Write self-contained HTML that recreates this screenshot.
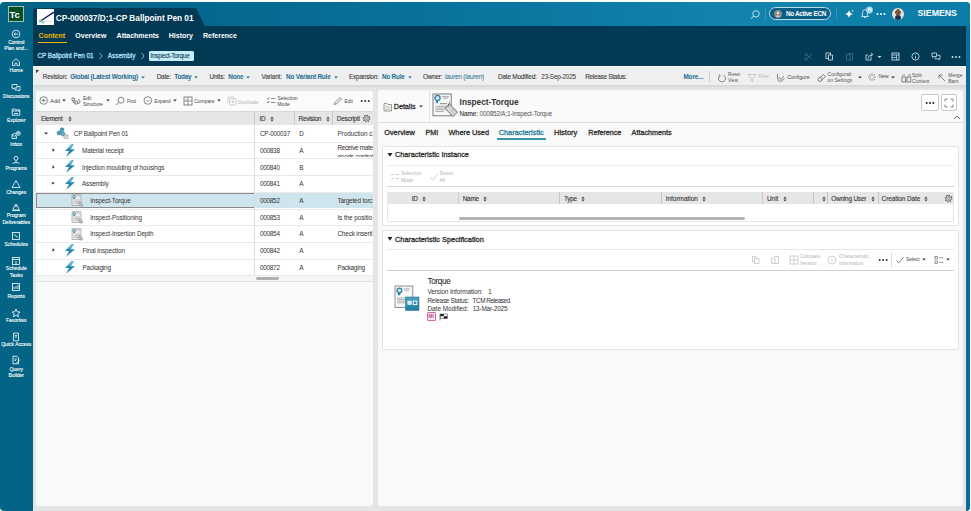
<!DOCTYPE html>
<html><head><meta charset="utf-8"><title>Teamcenter</title>
<style>
html,body{margin:0;padding:0;}
body{width:971px;height:511px;position:relative;overflow:hidden;background:#fff;font-family:"Liberation Sans",sans-serif;}
body>div{position:absolute;}
.t{position:absolute;white-space:nowrap;}
</style></head><body>
<div style="left:0px;top:1.5px;width:970.3px;height:509px;background:#036486;border-radius:4px;"></div>
<div style="left:32.5px;top:1.5px;width:937.8px;height:24.5px;background:linear-gradient(90deg,#036486 0%,#056890 20%,#0a76a0 50%,#1284ad 75%,#0b7ca7 100%);border-top-right-radius:4px;"></div>
<div style="left:32.5px;top:25.5px;width:933.5px;height:40.5px;background:#023a56;"></div>
<svg style="position:absolute;left:32.5px;top:7.7px;" width="175" height="18.3" viewBox="0 0 175 18.3"><path d="M0 18.3 V3 Q0 0 3 0 H163 L172 18.3 Z" fill="#023a56"/></svg>
<div style="left:32.5px;top:66px;width:933.5px;height:445px;background:#e5e5e5;"></div>
<div style="left:966px;top:25.5px;width:4.3px;height:483px;background:#0a6e9a;border-bottom-right-radius:3px;"></div>
<div style="left:7.8px;top:5.5px;width:16.7px;height:16.1px;background:#0b4d26;border:1px solid #9cc3b0;box-sizing:border-box;"></div>
<span class="t" style="left:9.6px;top:10.20px;font-size:9.40px;line-height:10px;color:#fff;font-weight:700;">Tc</span>
<svg style="position:absolute;left:11px;top:29.299999999999997px;" width="10" height="10" viewBox="0 0 10 10"><circle cx="5" cy="5" r="3.8" fill="none" stroke="#fff" stroke-width="0.8"/><path d="M7 5H3.2M4.6 3.5L3.1 5L4.6 6.5" fill="none" stroke="#fff" stroke-width="0.8"/></svg>
<span class="t" style="left:0px;top:38.70px;font-size:5.00px;line-height:7px;color:#fff;font-weight:400;width:32.5px;text-align:center;-webkit-text-stroke:0.12px #fff;">Control</span>
<span class="t" style="left:0px;top:44.50px;font-size:5.00px;line-height:7px;color:#fff;font-weight:400;width:32.5px;text-align:center;-webkit-text-stroke:0.12px #fff;">Plan and...</span>
<svg style="position:absolute;left:11px;top:57.4px;" width="10" height="10" viewBox="0 0 10 10"><path d="M1.5 5L5 1.8L8.5 5V8.6H6V6.2H4V8.6H1.5Z" fill="none" stroke="#fff" stroke-width="0.8"/></svg>
<span class="t" style="left:0px;top:66.70px;font-size:5.00px;line-height:7px;color:#fff;font-weight:400;width:32.5px;text-align:center;-webkit-text-stroke:0.12px #fff;">Home</span>
<svg style="position:absolute;left:11px;top:83.2px;" width="10" height="10" viewBox="0 0 10 10"><path d="M1 1.5H6V5H3L1.8 6V5H1Z M4 5.5V7H7L8.2 8V7H9V3.5H6.5" fill="none" stroke="#fff" stroke-width="0.8"/></svg>
<span class="t" style="left:0px;top:93.00px;font-size:5.00px;line-height:7px;color:#fff;font-weight:400;width:32.5px;text-align:center;-webkit-text-stroke:0.12px #fff;">Discussions</span>
<svg style="position:absolute;left:11px;top:106.7px;" width="10" height="10" viewBox="0 0 10 10"><path d="M1.2 2H4L4.8 2.8H8.8V8.2H1.2Z M1.2 4H8.8" fill="none" stroke="#fff" stroke-width="0.8"/><path d="M3 6.5H7" stroke="#fff" stroke-width="0.8"/></svg>
<span class="t" style="left:0px;top:116.50px;font-size:5.00px;line-height:7px;color:#fff;font-weight:400;width:32.5px;text-align:center;-webkit-text-stroke:0.12px #fff;">Explorer</span>
<svg style="position:absolute;left:11px;top:130.2px;" width="10" height="10" viewBox="0 0 10 10"><path d="M1 4.5L5 3L5.5 8.5H1Z M1 4.5L3.2 6.5L5.3 5" fill="none" stroke="#fff" stroke-width="0.8"/><circle cx="7.3" cy="3.3" r="2.6" fill="#bfe3f2" stroke="#005f83" stroke-width="0.5"/><text x="7.3" y="4.5" font-size="3" text-anchor="middle" fill="#005f83" font-family="Liberation Sans">10</text></svg>
<span class="t" style="left:0px;top:140.50px;font-size:5.00px;line-height:7px;color:#fff;font-weight:400;width:32.5px;text-align:center;-webkit-text-stroke:0.12px #fff;">Inbox</span>
<svg style="position:absolute;left:11px;top:154.7px;" width="10" height="10" viewBox="0 0 10 10"><circle cx="5" cy="3.3" r="2" fill="none" stroke="#fff" stroke-width="0.8"/><path d="M5 5.3V7 M1.5 8.5Q5 6.2 8.5 8.5" fill="none" stroke="#fff" stroke-width="0.8"/></svg>
<span class="t" style="left:0px;top:165.00px;font-size:5.00px;line-height:7px;color:#fff;font-weight:400;width:32.5px;text-align:center;-webkit-text-stroke:0.12px #fff;">Programs</span>
<svg style="position:absolute;left:11px;top:179.1px;" width="10" height="10" viewBox="0 0 10 10"><path d="M5 1.5L9 8.5H1Z" fill="none" stroke="#fff" stroke-width="0.8"/></svg>
<span class="t" style="left:0px;top:188.50px;font-size:5.00px;line-height:7px;color:#fff;font-weight:400;width:32.5px;text-align:center;-webkit-text-stroke:0.12px #fff;">Changes</span>
<svg style="position:absolute;left:11px;top:202.7px;" width="10" height="10" viewBox="0 0 10 10"><path d="M2 7Q2 3 5 3Q8 3 8 7Z M1 7.5H9 M4 3V1.6H6V3" fill="none" stroke="#fff" stroke-width="0.8"/></svg>
<span class="t" style="left:0px;top:212.10px;font-size:5.00px;line-height:7px;color:#fff;font-weight:400;width:32.5px;text-align:center;-webkit-text-stroke:0.12px #fff;">Program</span>
<span class="t" style="left:0px;top:219.00px;font-size:5.00px;line-height:7px;color:#fff;font-weight:400;width:32.5px;text-align:center;-webkit-text-stroke:0.12px #fff;">Deliverables</span>
<svg style="position:absolute;left:11px;top:231.2px;" width="10" height="10" viewBox="0 0 10 10"><rect x="1.5" y="1.5" width="7" height="7" fill="none" stroke="#fff" stroke-width="0.8"/><path d="M3 3.5L7 6.5" stroke="#fff" stroke-width="0.8"/></svg>
<span class="t" style="left:0px;top:240.90px;font-size:5.00px;line-height:7px;color:#fff;font-weight:400;width:32.5px;text-align:center;-webkit-text-stroke:0.12px #fff;">Schedules</span>
<svg style="position:absolute;left:11px;top:255.7px;" width="10" height="10" viewBox="0 0 10 10"><rect x="1.5" y="1.5" width="7" height="7" fill="none" stroke="#fff" stroke-width="0.8"/><path d="M1.5 3.5H8.5 M5 5V8.5" stroke="#fff" stroke-width="0.8"/></svg>
<span class="t" style="left:0px;top:265.00px;font-size:5.00px;line-height:7px;color:#fff;font-weight:400;width:32.5px;text-align:center;-webkit-text-stroke:0.12px #fff;">Schedule</span>
<span class="t" style="left:0px;top:271.50px;font-size:5.00px;line-height:7px;color:#fff;font-weight:400;width:32.5px;text-align:center;-webkit-text-stroke:0.12px #fff;">Tasks</span>
<svg style="position:absolute;left:11px;top:282.2px;" width="10" height="10" viewBox="0 0 10 10"><rect x="1.5" y="1.5" width="7" height="7" fill="none" stroke="#fff" stroke-width="0.8"/><path d="M3 7V5 M5 7V4 M7 7V3" stroke="#fff" stroke-width="0.8"/></svg>
<span class="t" style="left:0px;top:293.40px;font-size:5.00px;line-height:7px;color:#fff;font-weight:400;width:32.5px;text-align:center;-webkit-text-stroke:0.12px #fff;">Reports</span>
<svg style="position:absolute;left:11px;top:308.1px;" width="10" height="10" viewBox="0 0 10 10"><path d="M5 1L6.2 3.8L9 4L6.8 5.9L7.5 8.8L5 7.2L2.5 8.8L3.2 5.9L1 4L3.8 3.8Z" fill="none" stroke="#fff" stroke-width="0.8"/></svg>
<span class="t" style="left:0px;top:316.90px;font-size:5.00px;line-height:7px;color:#fff;font-weight:400;width:32.5px;text-align:center;-webkit-text-stroke:0.12px #fff;">Favorites</span>
<svg style="position:absolute;left:11px;top:332.0px;" width="10" height="10" viewBox="0 0 10 10"><path d="M2.5 1.2H7.5V8.8H2.5Z M3.8 3.5H6.2 M3.8 5H6.2" fill="none" stroke="#fff" stroke-width="0.8"/></svg>
<span class="t" style="left:0px;top:341.40px;font-size:5.00px;line-height:7px;color:#fff;font-weight:400;width:32.5px;text-align:center;-webkit-text-stroke:0.12px #fff;">Quick Access</span>
<svg style="position:absolute;left:11px;top:354.6px;" width="10" height="10" viewBox="0 0 10 10"><path d="M2 1.2H6L7.5 2.7V8.8H2Z M3.5 4H6 M3.5 5.5H5" fill="none" stroke="#fff" stroke-width="0.8"/><path d="M5.5 8L8.8 4.7" stroke="#fff" stroke-width="0.9"/></svg>
<span class="t" style="left:0px;top:365.90px;font-size:5.00px;line-height:7px;color:#fff;font-weight:400;width:32.5px;text-align:center;-webkit-text-stroke:0.12px #fff;">Query</span>
<span class="t" style="left:0px;top:371.80px;font-size:5.00px;line-height:7px;color:#fff;font-weight:400;width:32.5px;text-align:center;-webkit-text-stroke:0.12px #fff;">Builder</span>
<div style="left:37.2px;top:8.6px;width:17px;height:16px;background:#fff;"></div>
<svg style="position:absolute;left:37.2px;top:8.6px;" width="17" height="16" viewBox="0 0 17 16"><path d="M3.5 12L17 3" stroke="#15205a" stroke-width="1.5"/><circle cx="3.5" cy="12" r="1.6" fill="#7fb3c8"/><circle cx="6" cy="13.5" r="1.3" fill="#9cc"/><path d="M6 12.5H15" stroke="#ccc" stroke-width="0.5"/></svg>
<span class="t" style="left:55.7px;top:12.60px;font-size:8.26px;line-height:12px;color:#fff;font-weight:700;">CP-000037/D;1-CP Ballpoint Pen 01</span>
<svg style="position:absolute;left:749px;top:8.5px;" width="12" height="11" viewBox="0 0 12 11"><circle cx="7" cy="4.8" r="3.2" fill="none" stroke="#cfe8f2" stroke-width="0.9"/><path d="M4.7 7.1L2 9.8" stroke="#cfe8f2" stroke-width="1"/></svg>
<div style="left:765px;top:8px;width:0.7px;height:12px;background:#3b8fb3;"></div>
<div style="left:769px;top:7.2px;width:62px;height:12.6px;border:1px solid #b9dbe8;border-radius:7px;background:#0a5f86;box-sizing:border-box;"></div>
<svg style="position:absolute;left:774px;top:10px;" width="8" height="8" viewBox="0 0 8 8"><circle cx="4" cy="4" r="3.9" fill="#948c86"/><circle cx="4" cy="3" r="1.2" fill="#e8e4e0"/><path d="M1.8 6.8Q4 4.2 6.2 6.8Z" fill="#e8e4e0"/></svg>
<span class="t" style="left:786px;top:9.50px;font-size:6.40px;line-height:8px;color:#fff;font-weight:700;letter-spacing:-0.354px;">No Active ECN</span>
<div style="left:836px;top:8px;width:0.7px;height:12px;background:#3b8fb3;"></div>
<svg style="position:absolute;left:844px;top:8.5px;" width="10" height="10" viewBox="0 0 10 10"><path d="M5 1Q5.6 4.4 9 5Q5.6 5.6 5 9Q4.4 5.6 1 5Q4.4 4.4 5 1Z" fill="#fff"/><circle cx="8.6" cy="1.8" r="0.7" fill="#fff"/></svg>
<svg style="position:absolute;left:859px;top:6px;" width="15" height="13" viewBox="0 0 15 13"><path d="M2.5 10.5H9.5L8.5 9V6.5Q8.5 3.8 6 3.5Q3.5 3.8 3.5 6.5V9Z M5 11.2Q6 12.4 7 11.2" fill="none" stroke="#e8f4f8" stroke-width="0.8"/><circle cx="10.5" cy="4" r="3.4" fill="#9fd6ec"/><text x="10.5" y="5.3" font-size="3.6" text-anchor="middle" fill="#fff" font-family="Liberation Sans" font-weight="700">10</text></svg>
<svg style="position:absolute;left:876px;top:11.5px;" width="10" height="4" viewBox="0 0 10 4"><circle cx="1.5" cy="2" r="1" fill="#fff"/><circle cx="5" cy="2" r="1" fill="#fff"/><circle cx="8.5" cy="2" r="1" fill="#fff"/></svg>
<div style="left:891.5px;top:7.7px;width:12px;height:12px;border-radius:50%;background:radial-gradient(circle at 50% 35%,#7a5a3e 0 28%,#e8e2d8 30% 100%);overflow:hidden;"><div style="position:absolute;left:3px;top:7px;width:6px;height:6px;border-radius:50%;background:#1f3350;"></div></div>
<span class="t" style="left:917.5px;top:8.20px;font-size:8.78px;line-height:10px;color:#fff;font-weight:700;letter-spacing:0px;">SIEMENS</span>
<span class="t" style="left:38.6px;top:30.70px;font-size:7.00px;line-height:10px;color:#f0b400;font-weight:700;">Content</span>
<span class="t" style="left:75.3px;top:30.70px;font-size:7.00px;line-height:10px;color:#fff;font-weight:700;">Overview</span>
<span class="t" style="left:116.6px;top:30.70px;font-size:7.00px;line-height:10px;color:#fff;font-weight:700;">Attachments</span>
<span class="t" style="left:168.8px;top:30.70px;font-size:7.00px;line-height:10px;color:#fff;font-weight:700;">History</span>
<span class="t" style="left:203px;top:30.70px;font-size:7.00px;line-height:10px;color:#fff;font-weight:700;">Reference</span>
<div style="left:37.5px;top:42px;width:29px;height:1.2px;background:#f0b400;"></div>
<span class="t" style="left:37.5px;top:52.40px;font-size:6.40px;line-height:8px;color:#a9dcef;font-weight:400;letter-spacing:-0.061px;-webkit-text-stroke:0.3px #a9dcef;">CP Ballpoint Pen 01</span>
<svg style="position:absolute;left:98px;top:51.8px;" width="5" height="8" viewBox="0 0 5 8"><path d="M1.5 1L4 4L1.5 7" fill="none" stroke="#a9dcef" stroke-width="0.7"/></svg>
<span class="t" style="left:107.8px;top:52.40px;font-size:6.40px;line-height:8px;color:#a9dcef;font-weight:400;letter-spacing:-0.016px;-webkit-text-stroke:0.3px #a9dcef;">Assembly</span>
<svg style="position:absolute;left:139.5px;top:51.8px;" width="5" height="8" viewBox="0 0 5 8"><path d="M1.5 1L4 4L1.5 7" fill="none" stroke="#a9dcef" stroke-width="0.7"/></svg>
<div style="left:148.6px;top:51px;width:45.1px;height:10.3px;background:#c5eefa;border-radius:1.5px;"></div>
<span class="t" style="left:150.5px;top:52.20px;font-size:6.40px;line-height:8px;color:#0d3a4f;font-weight:400;letter-spacing:-0.236px;-webkit-text-stroke:0.1px #0d3a4f;">Inspect-Torque</span>
<svg style="position:absolute;left:804px;top:52px;" width="9" height="9" viewBox="0 0 9 9"><circle cx="2" cy="7" r="1.2" fill="none" stroke="#3d7490" stroke-width="0.7"/><circle cx="2" cy="2.5" r="1.2" fill="none" stroke="#3d7490" stroke-width="0.7"/><path d="M3 6.3L8 2 M3 3.2L8 7" stroke="#3d7490" stroke-width="0.7"/></svg>
<svg style="position:absolute;left:825px;top:52px;" width="9" height="9" viewBox="0 0 9 9"><rect x="1" y="1" width="4.5" height="5.5" fill="none" stroke="#d8ecf4" stroke-width="0.8"/><path d="M3.5 3H7.5V8H3.5Z" fill="#023a56" stroke="#d8ecf4" stroke-width="0.8"/></svg>
<svg style="position:absolute;left:845px;top:52px;" width="9" height="9" viewBox="0 0 9 9"><path d="M1.5 2.5H5V8H1.5Z M4 1.5H7.5V8H4" fill="none" stroke="#3d7490" stroke-width="0.8"/></svg>
<svg style="position:absolute;left:865px;top:52px;" width="9" height="9" viewBox="0 0 9 9"><path d="M6 4.5V8H1V3H3" fill="none" stroke="#d8ecf4" stroke-width="0.8"/><path d="M3 6.5Q3.5 3 7.5 2.5 M6 1L7.8 2.5L6 4" fill="none" stroke="#d8ecf4" stroke-width="0.8"/></svg>
<svg style="position:absolute;left:877px;top:54.5px;" width="5" height="4" viewBox="0 0 5 4"><path d="M0.5 1H4.5L2.5 3Z" fill="#d8ecf4"/></svg>
<svg style="position:absolute;left:891px;top:52px;" width="9" height="9" viewBox="0 0 9 9"><rect x="1" y="1" width="7" height="7" fill="none" stroke="#d8ecf4" stroke-width="0.8"/><path d="M1 3H8 M5.5 3V8 M1 5.5H5.5" stroke="#d8ecf4" stroke-width="0.7"/></svg>
<svg style="position:absolute;left:911px;top:52px;" width="9" height="9" viewBox="0 0 9 9"><circle cx="4.5" cy="4.5" r="3.6" fill="none" stroke="#d8ecf4" stroke-width="0.8"/><path d="M4.5 3.8V6.5" stroke="#d8ecf4" stroke-width="0.8"/><circle cx="4.5" cy="2.6" r="0.45" fill="#d8ecf4"/></svg>
<svg style="position:absolute;left:931px;top:52px;" width="10" height="9" viewBox="0 0 10 9"><path d="M1 1H5.5V4.5H2.5L1.5 5.5V4.5H1Z M4 5.3V6.8H7L8.2 7.8V6.8H9V3.3H6.3" fill="none" stroke="#d8ecf4" stroke-width="0.8"/></svg>
<svg style="position:absolute;left:951px;top:54.5px;" width="10" height="4" viewBox="0 0 10 4"><circle cx="1.5" cy="2" r="0.9" fill="#d8ecf4"/><circle cx="5" cy="2" r="0.9" fill="#d8ecf4"/><circle cx="8.5" cy="2" r="0.9" fill="#d8ecf4"/></svg>
<div style="left:32.5px;top:66px;width:933.5px;height:19.2px;background:#efefef;border-top:1.2px solid #fafafa;box-sizing:border-box;box-shadow:0 0.8px 0 #d6d6d6, 0 2px 2px rgba(0,0,0,0.06);"></div>
<svg style="position:absolute;left:35.5px;top:69.5px;" width="4" height="4" viewBox="0 0 4 4"><path d="M0 0H3.2L0 3.2Z" fill="#333"/></svg>
<span class="t" style="left:42.8px;top:72.20px;font-size:6.40px;line-height:10px;color:#3b3b3b;font-weight:400;letter-spacing:-0.183px;-webkit-text-stroke:0.1px #3b3b3b;">Revision:</span>
<span class="t" style="left:70.2px;top:72.20px;font-size:6.40px;line-height:10px;color:#1a6c93;font-weight:700;letter-spacing:-0.186px;">Global (Latest Working)</span>
<svg style="position:absolute;left:140.9px;top:75.7px;" width="4" height="3" viewBox="0 0 4 3"><path d="M0.2 0.5H3.8L2 2.5Z" fill="#1a6c93"/></svg>
<span class="t" style="left:156.7px;top:72.20px;font-size:6.40px;line-height:10px;color:#3b3b3b;font-weight:400;letter-spacing:-0.191px;-webkit-text-stroke:0.1px #3b3b3b;">Date:</span>
<span class="t" style="left:174.2px;top:72.20px;font-size:6.40px;line-height:10px;color:#1a6c93;font-weight:700;letter-spacing:-0.218px;">Today</span>
<svg style="position:absolute;left:193.8px;top:75.7px;" width="4" height="3" viewBox="0 0 4 3"><path d="M0.2 0.5H3.8L2 2.5Z" fill="#1a6c93"/></svg>
<span class="t" style="left:209.5px;top:72.20px;font-size:6.40px;line-height:10px;color:#3b3b3b;font-weight:400;letter-spacing:-0.170px;-webkit-text-stroke:0.1px #3b3b3b;">Units:</span>
<span class="t" style="left:228.3px;top:72.20px;font-size:6.40px;line-height:10px;color:#1a6c93;font-weight:700;letter-spacing:-0.238px;">None</span>
<svg style="position:absolute;left:246.3px;top:75.7px;" width="4" height="3" viewBox="0 0 4 3"><path d="M0.2 0.5H3.8L2 2.5Z" fill="#1a6c93"/></svg>
<span class="t" style="left:261.6px;top:72.20px;font-size:6.40px;line-height:10px;color:#3b3b3b;font-weight:400;letter-spacing:-0.169px;-webkit-text-stroke:0.1px #3b3b3b;">Variant:</span>
<span class="t" style="left:286.1px;top:72.20px;font-size:6.40px;line-height:10px;color:#1a6c93;font-weight:700;letter-spacing:-0.187px;">No Variant Rule</span>
<svg style="position:absolute;left:333.9px;top:75.7px;" width="4" height="3" viewBox="0 0 4 3"><path d="M0.2 0.5H3.8L2 2.5Z" fill="#1a6c93"/></svg>
<span class="t" style="left:349px;top:72.20px;font-size:6.40px;line-height:10px;color:#3b3b3b;font-weight:400;letter-spacing:-0.198px;-webkit-text-stroke:0.1px #3b3b3b;">Expansion:</span>
<span class="t" style="left:381.9px;top:72.20px;font-size:6.40px;line-height:10px;color:#1a6c93;font-weight:700;letter-spacing:-0.205px;">No Rule</span>
<svg style="position:absolute;left:407.6px;top:75.7px;" width="4" height="3" viewBox="0 0 4 3"><path d="M0.2 0.5H3.8L2 2.5Z" fill="#1a6c93"/></svg>
<span class="t" style="left:423px;top:72.20px;font-size:6.40px;line-height:10px;color:#3b3b3b;font-weight:400;letter-spacing:-0.215px;-webkit-text-stroke:0.1px #3b3b3b;">Owner:</span>
<span class="t" style="left:444.9px;top:72.20px;font-size:6.40px;line-height:10px;color:#1a6c93;font-weight:400;letter-spacing:-0.160px;">lauren (lauren)</span>
<span class="t" style="left:498px;top:72.20px;font-size:6.40px;line-height:10px;color:#3b3b3b;font-weight:400;letter-spacing:-0.184px;-webkit-text-stroke:0.1px #3b3b3b;">Date Modified:</span>
<span class="t" style="left:541.3px;top:72.20px;font-size:6.40px;line-height:10px;color:#333;font-weight:400;letter-spacing:-0.221px;">23-Sep-2025</span>
<span class="t" style="left:585.2px;top:72.20px;font-size:6.40px;line-height:10px;color:#3b3b3b;font-weight:400;letter-spacing:-0.259px;-webkit-text-stroke:0.1px #3b3b3b;">Release Status:</span>
<span class="t" style="left:683.4px;top:72.20px;font-size:6.40px;line-height:10px;color:#1a6c93;font-weight:700;letter-spacing:-0.092px;">More...</span>
<div style="left:708.8px;top:70.8px;width:0.8px;height:11.6px;background:#d0d0d0;"></div>
<svg style="position:absolute;left:717px;top:72.5px;" width="10" height="10" viewBox="0 0 10 10"><path d="M3 2.5A3.5 3.5 0 1 0 6.5 2.2" fill="none" stroke="#555" stroke-width="0.7"/><path d="M2 1.5L3.2 2.6L2 3.8" fill="none" stroke="#555" stroke-width="0.7"/></svg>
<span class="t" style="left:728.1px;top:72.00px;font-size:4.60px;line-height:6px;color:#555;font-weight:400;">Reset</span>
<span class="t" style="left:728.1px;top:78.20px;font-size:4.60px;line-height:6px;color:#555;font-weight:400;">View</span>
<svg style="position:absolute;left:747px;top:72.5px;" width="10" height="10" viewBox="0 0 10 10"><path d="M1 1.5H9L5.8 5.5V8.5L4.2 7.5V5.5Z" fill="none" stroke="#b8b8b8" stroke-width="0.7"/></svg>
<span class="t" style="left:758.4px;top:74.30px;font-size:4.73px;line-height:6px;color:#b5b5b5;font-weight:400;">Filter</span>
<svg style="position:absolute;left:776px;top:72.5px;" width="10" height="10" viewBox="0 0 10 10"><path d="M1.5 1V5Q1.5 8.5 5 8.5L8.5 5.5 M3 4L5 6.5L8 3" fill="none" stroke="#555" stroke-width="0.7"/></svg>
<span class="t" style="left:787.2px;top:74.30px;font-size:5.17px;line-height:6px;color:#444;font-weight:400;">Configure</span>
<svg style="position:absolute;left:817px;top:72.5px;" width="10" height="10" viewBox="0 0 10 10"><circle cx="3" cy="6.5" r="2" fill="none" stroke="#555" stroke-width="0.7"/><path d="M3 4.5L6.5 1.5L8.5 3.5L5 7" fill="none" stroke="#555" stroke-width="0.7"/></svg>
<span class="t" style="left:827.6px;top:72.00px;font-size:4.95px;line-height:6px;color:#555;font-weight:400;">Configurati</span>
<span class="t" style="left:827.6px;top:78.20px;font-size:4.95px;line-height:6px;color:#555;font-weight:400;">on Settings</span>
<svg style="position:absolute;left:858px;top:75.8px;" width="4" height="3" viewBox="0 0 4 3"><path d="M0.2 0.5H3.8L2 2.5Z" fill="#333"/></svg>
<svg style="position:absolute;left:867px;top:72.3px;" width="10" height="10" viewBox="0 0 10 10"><path d="M5 1V3.5 M5 6.5V9 M1 5H3.5 M6.5 5H9 M2.2 2.2L3.8 3.8 M6.2 6.2L7.8 7.8 M7.8 2.2L6.2 3.8 M3.8 6.2L2.2 7.8" stroke="#555" stroke-width="0.6"/></svg>
<span class="t" style="left:878.7px;top:74.30px;font-size:4.95px;line-height:6px;color:#444;font-weight:400;">New</span>
<svg style="position:absolute;left:891.1px;top:75.8px;" width="4" height="3" viewBox="0 0 4 3"><path d="M0.2 0.5H3.8L2 2.5Z" fill="#333"/></svg>
<svg style="position:absolute;left:900.5px;top:72.5px;" width="11" height="10" viewBox="0 0 11 10"><rect x="1" y="4" width="3.8" height="5" fill="none" stroke="#555" stroke-width="0.7"/><rect x="6" y="4" width="3.8" height="5" fill="none" stroke="#555" stroke-width="0.7"/><path d="M1 2H4 M7 2H10" stroke="#555" stroke-width="0.6"/></svg>
<span class="t" style="left:912px;top:72.00px;font-size:5.00px;line-height:6px;color:#555;font-weight:400;">Split</span>
<span class="t" style="left:912px;top:78.20px;font-size:5.08px;line-height:6px;color:#555;font-weight:400;">Context</span>
<svg style="position:absolute;left:936.5px;top:72.5px;" width="10" height="10" viewBox="0 0 10 10"><path d="M2 2L8 8 M2 2H5.5 M2 2V5.5" fill="none" stroke="#555" stroke-width="0.7"/></svg>
<span class="t" style="left:948.2px;top:72.00px;font-size:5.04px;line-height:6px;color:#555;font-weight:400;">Merge</span>
<span class="t" style="left:948.2px;top:78.20px;font-size:5.04px;line-height:6px;color:#555;font-weight:400;">Bars</span>
<div style="left:36px;top:90.6px;width:337px;height:415.4px;background:#f9f9f9;border-radius:3px;"></div>
<div style="left:36px;top:90.6px;width:337px;height:21px;background:#fbfbfb;border-radius:3px 3px 0 0;"></div>
<svg style="position:absolute;left:39px;top:96.4px;" width="10" height="10" viewBox="0 0 10 10"><circle cx="4.7" cy="4.5" r="3.8" fill="none" stroke="#555" stroke-width="0.7"/><path d="M4.7 2.6V6.4 M2.8 4.5H6.6" stroke="#555" stroke-width="0.7"/></svg>
<span class="t" style="left:50.3px;top:97.90px;font-size:5.40px;line-height:6px;color:#444;font-weight:400;">Add</span>
<svg style="position:absolute;left:61.8px;top:99.4px;" width="4" height="3" viewBox="0 0 4 3"><path d="M0.2 0.5H3.8L2 2.5Z" fill="#333"/></svg>
<svg style="position:absolute;left:71px;top:96.4px;" width="11" height="10" viewBox="0 0 11 10"><path d="M1 2H3.5V4.5H1Z M4 5H6.5V8H4Z M2.2 4.5V6.5H4 M7 3.5Q9 3.5 9 5.5Q9 7.5 7 7.5" fill="none" stroke="#555" stroke-width="0.7"/></svg>
<span class="t" style="left:82.9px;top:95.90px;font-size:4.90px;line-height:6px;color:#444;font-weight:400;">Edit</span>
<span class="t" style="left:82.9px;top:102.10px;font-size:4.93px;line-height:6px;color:#444;font-weight:400;">Structure</span>
<svg style="position:absolute;left:105.5px;top:99.4px;" width="4" height="3" viewBox="0 0 4 3"><path d="M0.2 0.5H3.8L2 2.5Z" fill="#333"/></svg>
<svg style="position:absolute;left:115px;top:95.9px;" width="10" height="10" viewBox="0 0 10 10"><circle cx="6" cy="4.2" r="3" fill="none" stroke="#555" stroke-width="0.7"/><path d="M3.8 6.4L1.2 9" stroke="#555" stroke-width="0.8"/></svg>
<span class="t" style="left:126.9px;top:98.90px;font-size:4.68px;line-height:6px;color:#444;font-weight:400;">Find</span>
<svg style="position:absolute;left:143px;top:96.4px;" width="10" height="10" viewBox="0 0 10 10"><circle cx="4.8" cy="4.5" r="3.8" fill="none" stroke="#555" stroke-width="0.7"/><path d="M3 3.8L4.8 5.6L6.6 3.8" fill="none" stroke="#555" stroke-width="0.7"/></svg>
<span class="t" style="left:154.6px;top:98.50px;font-size:4.72px;line-height:6px;color:#444;font-weight:400;">Expand</span>
<svg style="position:absolute;left:172.7px;top:99.4px;" width="4" height="3" viewBox="0 0 4 3"><path d="M0.2 0.5H3.8L2 2.5Z" fill="#333"/></svg>
<svg style="position:absolute;left:182.5px;top:96.1px;" width="10" height="10" viewBox="0 0 10 10"><rect x="1" y="1" width="8" height="8" fill="none" stroke="#555" stroke-width="0.7"/><path d="M5 1V9 M1 5H9 M3 3L4 4" stroke="#555" stroke-width="0.6"/></svg>
<span class="t" style="left:194.3px;top:98.50px;font-size:4.91px;line-height:6px;color:#444;font-weight:400;">Compare</span>
<svg style="position:absolute;left:217.4px;top:99.4px;" width="4" height="3" viewBox="0 0 4 3"><path d="M0.2 0.5H3.8L2 2.5Z" fill="#333"/></svg>
<svg style="position:absolute;left:226.5px;top:96.1px;" width="10" height="10" viewBox="0 0 10 10"><rect x="2.5" y="2.5" width="6.5" height="6.5" rx="1" fill="none" stroke="#b8b8b8" stroke-width="0.7"/><path d="M1 7V1H7 M5.7 4V7.5 M4 5.7H7.5" fill="none" stroke="#b8b8b8" stroke-width="0.6"/></svg>
<span class="t" style="left:238px;top:98.50px;font-size:5.01px;line-height:6px;color:#b5b5b5;font-weight:400;">Duplicate</span>
<svg style="position:absolute;left:266px;top:96.1px;" width="11" height="10" viewBox="0 0 11 10"><path d="M1 2.5L2 3.5L3.5 1.5 M5 2.5H9.5 M1 6L2 7L3.5 5 M5 6.5H9.5" fill="none" stroke="#555" stroke-width="0.7"/></svg>
<span class="t" style="left:277.5px;top:95.90px;font-size:4.89px;line-height:6px;color:#444;font-weight:400;">Selection</span>
<span class="t" style="left:277.5px;top:102.10px;font-size:4.89px;line-height:6px;color:#444;font-weight:400;">Mode</span>
<svg style="position:absolute;left:333px;top:96.1px;" width="10" height="10" viewBox="0 0 10 10"><path d="M1.5 8.5L2 6.5L7 1.5L8.5 3L3.5 8Z" fill="none" stroke="#555" stroke-width="0.7"/></svg>
<span class="t" style="left:344.6px;top:98.90px;font-size:4.76px;line-height:6px;color:#444;font-weight:400;">Edit</span>
<svg style="position:absolute;left:360px;top:98.9px;" width="11" height="4" viewBox="0 0 11 4"><circle cx="1.7" cy="2" r="1" fill="#333"/><circle cx="5.2" cy="2" r="1" fill="#333"/><circle cx="8.7" cy="2" r="1" fill="#333"/></svg>
<div style="left:36px;top:111.0px;width:337px;height:14px;background:#e6e6e6;border-top:0.6px solid #d8d8d8;box-sizing:border-box;"></div>
<span class="t" style="left:40.9px;top:115.00px;font-size:6.40px;line-height:8px;color:#333;font-weight:400;letter-spacing:-0.241px;-webkit-text-stroke:0.1px #333;">Element</span>
<svg style="position:absolute;left:67.6px;top:116px;" width="4" height="6" viewBox="0 0 4 6"><path d="M0.4 2.6L2 0.6L3.6 2.6Z M0.4 3.4L2 5.4L3.6 3.4Z" fill="#3a3a3a"/></svg>
<div style="left:254.2px;top:111.2px;width:0.8px;height:13.8px;background:#c8c8c8;"></div>
<span class="t" style="left:259.5px;top:115.00px;font-size:6.40px;line-height:8px;color:#333;font-weight:400;letter-spacing:-0.200px;-webkit-text-stroke:0.1px #333;">ID</span>
<svg style="position:absolute;left:269.8px;top:116px;" width="4" height="6" viewBox="0 0 4 6"><path d="M0.4 2.6L2 0.6L3.6 2.6Z M0.4 3.4L2 5.4L3.6 3.4Z" fill="#3a3a3a"/></svg>
<div style="left:294.0px;top:111.2px;width:0.8px;height:13.8px;background:#c8c8c8;"></div>
<span class="t" style="left:298.6px;top:115.00px;font-size:6.40px;line-height:8px;color:#333;font-weight:400;letter-spacing:-0.254px;-webkit-text-stroke:0.1px #333;">Revision</span>
<svg style="position:absolute;left:326px;top:116px;" width="4" height="6" viewBox="0 0 4 6"><path d="M0.4 2.6L2 0.6L3.6 2.6Z M0.4 3.4L2 5.4L3.6 3.4Z" fill="#3a3a3a"/></svg>
<div style="left:331.8px;top:111.2px;width:0.8px;height:13.8px;background:#c8c8c8;"></div>
<span class="t" style="left:336.8px;top:115.00px;font-size:6.40px;line-height:8px;color:#333;font-weight:400;letter-spacing:-0.216px;-webkit-text-stroke:0.1px #333;">Descripti</span>
<svg style="position:absolute;left:362.3px;top:113.6px;" width="9" height="9" viewBox="0 0 9 9"><circle cx="4.5" cy="4.5" r="3.2" fill="none" stroke="#555" stroke-width="1.3" stroke-dasharray="1.1 1.4"/><circle cx="4.5" cy="4.5" r="2.6" fill="none" stroke="#555" stroke-width="0.6"/><circle cx="4.5" cy="4.5" r="1.1" fill="none" stroke="#555" stroke-width="0.6"/></svg>
<div style="left:36px;top:125px;width:337px;height:150.2px;background:#fff;"></div>
<div style="left:36px;top:141.5px;width:337px;height:0.8px;background:#e9e9e9;"></div>
<div style="left:36px;top:158.2px;width:337px;height:0.8px;background:#e9e9e9;"></div>
<div style="left:36px;top:174.9px;width:337px;height:0.8px;background:#e9e9e9;"></div>
<div style="left:36px;top:191.9px;width:337px;height:0.8px;background:#e9e9e9;"></div>
<div style="left:36px;top:208.6px;width:337px;height:0.8px;background:#e9e9e9;"></div>
<div style="left:36px;top:225.3px;width:337px;height:0.8px;background:#e9e9e9;"></div>
<div style="left:36px;top:242.0px;width:337px;height:0.8px;background:#e9e9e9;"></div>
<div style="left:36px;top:258.6px;width:337px;height:0.8px;background:#e9e9e9;"></div>
<div style="left:36px;top:275.2px;width:337px;height:0.8px;background:#e9e9e9;"></div>
<div style="left:36.3px;top:192.5px;width:218.3px;height:15.9px;background:#cfe5ed;border:1px solid #8a8a8a;box-sizing:border-box;"></div>
<div style="left:255.0px;top:192.8px;width:118px;height:15.4px;background:#cfe5ed;"></div>
<div style="left:254.2px;top:125px;width:0.8px;height:150.2px;background:#dcdcdc;"></div>
<svg style="position:absolute;left:43.9px;top:131.9px;" width="4" height="3" viewBox="0 0 4 3"><path d="M0.2 0.5H3.8L2 2.6Z" fill="#222"/></svg>
<svg style="position:absolute;left:55.7px;top:127.4px;" width="13" height="12" viewBox="0 0 13 12"><circle cx="6" cy="2.8" r="2" fill="#4f9dbd" stroke="#2d6f8c" stroke-width="0.5"/><circle cx="3" cy="6" r="2" fill="#4f9dbd" stroke="#2d6f8c" stroke-width="0.5"/><circle cx="7" cy="7" r="2" fill="#6ab0cc" stroke="#2d6f8c" stroke-width="0.5"/><rect x="8" y="8" width="4" height="3.5" fill="#ddd" stroke="#777" stroke-width="0.4"/></svg>
<span class="t" style="left:73.7px;top:130.20px;font-size:6.40px;line-height:8px;color:#333;font-weight:400;letter-spacing:-0.132px;">CP Ballpoint Pen 01</span>
<span class="t" style="left:259.9px;top:130.20px;font-size:6.40px;line-height:8px;color:#333;font-weight:400;letter-spacing:-0.253px;">CP-000037</span>
<span class="t" style="left:299.2px;top:130.20px;font-size:6.40px;line-height:8px;color:#333;font-weight:400;">D</span>
<div style="left:337.4px;top:127.4px;width:35.5px;height:12px;overflow:hidden;">
<span class="t" style="left:0px;top:2.80px;font-size:6.40px;line-height:8px;color:#333;font-weight:400;letter-spacing:-0.046px;">Production c</span>
</div>
<svg style="position:absolute;left:51.9px;top:148.0px;" width="3" height="4" viewBox="0 0 3 4"><path d="M0.5 0.2V3.8L2.6 2Z" fill="#222"/></svg>
<svg style="position:absolute;left:63.599999999999994px;top:143.5px;" width="12" height="13" viewBox="0 0 12 13"><path d="M7.5 0.3L1 7H5L2.2 12.7L11 5.2H6.8L9.6 0.3Z" fill="#2589ad"/><path d="M7.5 0.3L3.6 4.8H7L9.6 0.3Z" fill="#62b7d6"/></svg>
<span class="t" style="left:82.0px;top:146.80px;font-size:6.40px;line-height:8px;color:#333;font-weight:400;letter-spacing:-0.120px;">Material receipt</span>
<span class="t" style="left:259.9px;top:146.80px;font-size:6.40px;line-height:8px;color:#333;font-weight:400;letter-spacing:-0.250px;">000838</span>
<span class="t" style="left:299.2px;top:146.80px;font-size:6.40px;line-height:8px;color:#333;font-weight:400;">A</span>
<div style="left:337.4px;top:144.0px;width:35.5px;height:12px;overflow:hidden;">
<span class="t" style="left:0px;top:0.30px;font-size:6.40px;line-height:8px;color:#333;font-weight:400;letter-spacing:-0.306px;">Receive mate</span>
</div>
<svg style="position:absolute;left:51.9px;top:164.7px;" width="3" height="4" viewBox="0 0 3 4"><path d="M0.5 0.2V3.8L2.6 2Z" fill="#222"/></svg>
<svg style="position:absolute;left:63.599999999999994px;top:160.2px;" width="12" height="13" viewBox="0 0 12 13"><path d="M7.5 0.3L1 7H5L2.2 12.7L11 5.2H6.8L9.6 0.3Z" fill="#2589ad"/><path d="M7.5 0.3L3.6 4.8H7L9.6 0.3Z" fill="#62b7d6"/></svg>
<span class="t" style="left:82.0px;top:163.50px;font-size:6.40px;line-height:8px;color:#333;font-weight:400;letter-spacing:-0.126px;">Injection moulding of housings</span>
<span class="t" style="left:259.9px;top:163.50px;font-size:6.40px;line-height:8px;color:#333;font-weight:400;letter-spacing:-0.250px;">000840</span>
<span class="t" style="left:299.2px;top:163.50px;font-size:6.40px;line-height:8px;color:#333;font-weight:400;">B</span>
<svg style="position:absolute;left:51.4px;top:181.9px;" width="4" height="3" viewBox="0 0 4 3"><path d="M0.2 0.5H3.8L2 2.6Z" fill="#222"/></svg>
<svg style="position:absolute;left:63.599999999999994px;top:176.9px;" width="12" height="13" viewBox="0 0 12 13"><path d="M7.5 0.3L1 7H5L2.2 12.7L11 5.2H6.8L9.6 0.3Z" fill="#2589ad"/><path d="M7.5 0.3L3.6 4.8H7L9.6 0.3Z" fill="#62b7d6"/></svg>
<span class="t" style="left:82.0px;top:180.20px;font-size:6.40px;line-height:8px;color:#333;font-weight:400;letter-spacing:-0.152px;">Assembly</span>
<span class="t" style="left:259.9px;top:180.20px;font-size:6.40px;line-height:8px;color:#333;font-weight:400;letter-spacing:-0.250px;">000841</span>
<span class="t" style="left:299.2px;top:180.20px;font-size:6.40px;line-height:8px;color:#333;font-weight:400;">A</span>
<svg style="position:absolute;left:71.0px;top:194.3px;" width="13" height="13" viewBox="0 0 13 13"><rect x="1" y="0.8" width="9" height="10.6" fill="#eeeeee" stroke="#8a8a8a" stroke-width="0.6"/><circle cx="3.2" cy="2.8" r="1.3" fill="#d6e8ee" stroke="#2f7f9f" stroke-width="0.8"/><path d="M2.6 3.8L2.4 5.6L3.3 5L3.9 5.6L3.8 3.8" fill="#2f7f9f"/><path d="M5.5 2H9 M4 6H9 M2.5 7.6H8 M2.5 9.3H7" stroke="#9a9a9a" stroke-width="0.6"/><path d="M6.8 9.2L8.6 7.4L12 10.8L10.2 12.6Z" fill="#bdbdbd" stroke="#7a7a7a" stroke-width="0.5"/></svg>
<span class="t" style="left:90.2px;top:197.10px;font-size:6.40px;line-height:8px;color:#333;font-weight:400;letter-spacing:-0.132px;">Inspect-Torque</span>
<span class="t" style="left:259.9px;top:197.10px;font-size:6.40px;line-height:8px;color:#333;font-weight:400;letter-spacing:-0.250px;">000852</span>
<span class="t" style="left:299.2px;top:197.10px;font-size:6.40px;line-height:8px;color:#333;font-weight:400;">A</span>
<div style="left:337.4px;top:194.3px;width:35.5px;height:12px;overflow:hidden;">
<span class="t" style="left:0px;top:2.80px;font-size:6.40px;line-height:8px;color:#333;font-weight:400;letter-spacing:-0.180px;">Targeted torc</span>
</div>
<svg style="position:absolute;left:71.0px;top:210.9px;" width="13" height="13" viewBox="0 0 13 13"><rect x="1" y="0.8" width="9" height="10.6" fill="#eeeeee" stroke="#8a8a8a" stroke-width="0.6"/><circle cx="3.2" cy="2.8" r="1.3" fill="#d6e8ee" stroke="#2f7f9f" stroke-width="0.8"/><path d="M2.6 3.8L2.4 5.6L3.3 5L3.9 5.6L3.8 3.8" fill="#2f7f9f"/><path d="M5.5 2H9 M4 6H9 M2.5 7.6H8 M2.5 9.3H7" stroke="#9a9a9a" stroke-width="0.6"/><path d="M6.8 9.2L8.6 7.4L12 10.8L10.2 12.6Z" fill="#bdbdbd" stroke="#7a7a7a" stroke-width="0.5"/></svg>
<span class="t" style="left:90.2px;top:213.70px;font-size:6.40px;line-height:8px;color:#333;font-weight:400;letter-spacing:-0.125px;">Inspect-Positioning</span>
<span class="t" style="left:259.9px;top:213.70px;font-size:6.40px;line-height:8px;color:#333;font-weight:400;letter-spacing:-0.250px;">000853</span>
<span class="t" style="left:299.2px;top:213.70px;font-size:6.40px;line-height:8px;color:#333;font-weight:400;">A</span>
<div style="left:337.4px;top:210.9px;width:35.5px;height:12px;overflow:hidden;">
<span class="t" style="left:0px;top:2.80px;font-size:6.40px;line-height:8px;color:#333;font-weight:400;letter-spacing:-0.080px;">Is the positio</span>
</div>
<svg style="position:absolute;left:71.0px;top:227.6px;" width="13" height="13" viewBox="0 0 13 13"><rect x="1" y="0.8" width="9" height="10.6" fill="#eeeeee" stroke="#8a8a8a" stroke-width="0.6"/><circle cx="3.2" cy="2.8" r="1.3" fill="#d6e8ee" stroke="#2f7f9f" stroke-width="0.8"/><path d="M2.6 3.8L2.4 5.6L3.3 5L3.9 5.6L3.8 3.8" fill="#2f7f9f"/><path d="M5.5 2H9 M4 6H9 M2.5 7.6H8 M2.5 9.3H7" stroke="#9a9a9a" stroke-width="0.6"/><path d="M6.8 9.2L8.6 7.4L12 10.8L10.2 12.6Z" fill="#bdbdbd" stroke="#7a7a7a" stroke-width="0.5"/></svg>
<span class="t" style="left:90.2px;top:230.40px;font-size:6.40px;line-height:8px;color:#333;font-weight:400;letter-spacing:-0.126px;">Inspect-Insertion Depth</span>
<span class="t" style="left:259.9px;top:230.40px;font-size:6.40px;line-height:8px;color:#333;font-weight:400;letter-spacing:-0.250px;">000854</span>
<span class="t" style="left:299.2px;top:230.40px;font-size:6.40px;line-height:8px;color:#333;font-weight:400;">A</span>
<div style="left:337.4px;top:227.6px;width:35.5px;height:12px;overflow:hidden;">
<span class="t" style="left:0px;top:2.80px;font-size:6.40px;line-height:8px;color:#333;font-weight:400;letter-spacing:-0.151px;">Check inserti</span>
</div>
<svg style="position:absolute;left:52.0px;top:248.3px;" width="3" height="4" viewBox="0 0 3 4"><path d="M0.5 0.2V3.8L2.6 2Z" fill="#222"/></svg>
<svg style="position:absolute;left:64.1px;top:243.8px;" width="12" height="13" viewBox="0 0 12 13"><path d="M7.5 0.3L1 7H5L2.2 12.7L11 5.2H6.8L9.6 0.3Z" fill="#2589ad"/><path d="M7.5 0.3L3.6 4.8H7L9.6 0.3Z" fill="#62b7d6"/></svg>
<span class="t" style="left:82.4px;top:247.10px;font-size:6.40px;line-height:8px;color:#333;font-weight:400;letter-spacing:-0.122px;">Final inspection</span>
<span class="t" style="left:259.9px;top:247.10px;font-size:6.40px;line-height:8px;color:#333;font-weight:400;letter-spacing:-0.250px;">000842</span>
<span class="t" style="left:299.2px;top:247.10px;font-size:6.40px;line-height:8px;color:#333;font-weight:400;">A</span>
<svg style="position:absolute;left:64.1px;top:260.5px;" width="12" height="13" viewBox="0 0 12 13"><path d="M7.5 0.3L1 7H5L2.2 12.7L11 5.2H6.8L9.6 0.3Z" fill="#2589ad"/><path d="M7.5 0.3L3.6 4.8H7L9.6 0.3Z" fill="#62b7d6"/></svg>
<span class="t" style="left:82.4px;top:263.80px;font-size:6.40px;line-height:8px;color:#333;font-weight:400;letter-spacing:-0.145px;">Packaging</span>
<span class="t" style="left:259.9px;top:263.80px;font-size:6.40px;line-height:8px;color:#333;font-weight:400;letter-spacing:-0.250px;">000872</span>
<span class="t" style="left:299.2px;top:263.80px;font-size:6.40px;line-height:8px;color:#333;font-weight:400;">A</span>
<div style="left:337.4px;top:261.0px;width:35.5px;height:12px;overflow:hidden;">
<span class="t" style="left:0px;top:2.80px;font-size:6.40px;line-height:8px;color:#333;font-weight:400;letter-spacing:-0.259px;">Packaging</span>
</div>
<div style="left:337.4px;top:154.3px;width:35.5px;height:3.2px;overflow:hidden;">
<span class="t" style="left:0px;top:-1.50px;font-size:6.40px;line-height:8px;color:#333;font-weight:400;letter-spacing:-0.185px;">goods control</span>
</div>
<div style="left:36px;top:275.0px;width:337px;height:6.2px;background:#f5f5f5;border-top:0.6px solid #e8e8e8;box-sizing:border-box;"></div>
<div style="left:256.1px;top:277.1px;width:22.5px;height:2.8px;background:#b0b0b0;border-radius:1.4px;"></div>
<div style="left:36px;top:281px;width:337px;height:0.8px;background:#e2e2e2;"></div>
<div style="left:378px;top:90.1px;width:585px;height:416px;background:#f9f9f9;border-radius:3px;"></div>
<div style="left:378px;top:90.1px;width:585px;height:32px;background:#fafafa;border-radius:3px 3px 0 0;"></div>
<div style="left:378px;top:121.6px;width:585px;height:0.8px;background:#dedede;"></div>
<div style="left:428.5px;top:90.1px;width:0.8px;height:31.5px;background:#e2e2e2;"></div>
<svg style="position:absolute;left:382.5px;top:101.5px;" width="10" height="10" viewBox="0 0 10 10"><path d="M1 1.5H4L5 2.5H8.5V9H1Z" fill="#eee" stroke="#777" stroke-width="0.7"/><path d="M2.5 4.5H7 M2.5 6H7 M2.5 7.5H7" stroke="#aaa" stroke-width="0.5"/></svg>
<span class="t" style="left:393.7px;top:103.00px;font-size:7.20px;line-height:8px;color:#333;font-weight:400;-webkit-text-stroke:0.3px #333;">Details</span>
<svg style="position:absolute;left:418.7px;top:104.9px;" width="4" height="3" viewBox="0 0 4 3"><path d="M0.2 0.5H3.8L2 2.5Z" fill="#333"/></svg>
<svg style="position:absolute;left:432px;top:93px;" width="27" height="27" viewBox="0 0 27 27"><rect x="1" y="1" width="18.2" height="21.8" fill="#f6f6f6" stroke="#6f6f6f" stroke-width="0.9"/><circle cx="5.5" cy="5" r="2.6" fill="#cfe3ea" stroke="#2f7f9f" stroke-width="1.3"/><path d="M4.3 7.2L3.6 10.5L5 9.6L5.8 10.8L6.3 7.4" fill="#2f7f9f"/><path d="M10 3.6H17 M11 5.2H16" stroke="#8a8a8a" stroke-width="0.7"/><path d="M8 10.6H15" stroke="#9a9a9a" stroke-width="1.2"/><path d="M3.5 13.3H14 M3.5 15H13 M3.5 16.7H12.5 M3.5 18.4H12" stroke="#9a9a9a" stroke-width="0.8"/><path d="M13.8 14.2L17.2 10.8L25.5 19.1L21.1 23.5L13.8 16.2Z" fill="#dcdcdc" stroke="#5f5f5f" stroke-width="0.9"/><path d="M18 16.5L22 20.5 M19.5 15L23.3 18.8" stroke="#8a8a8a" stroke-width="0.6"/><circle cx="16.2" cy="13.2" r="0.9" fill="#fff" stroke="#555" stroke-width="0.5"/><path d="M16.2 13.2L17.8 8.5" stroke="#555" stroke-width="0.6"/></svg>
<span class="t" style="left:459.6px;top:96.90px;font-size:8.28px;line-height:11px;color:#333;font-weight:700;">Inspect-Torque</span>
<span class="t" style="left:459.6px;top:110.10px;font-size:6.40px;line-height:8px;color:#333;font-weight:400;letter-spacing:-0.118px;-webkit-text-stroke:0.1px #333;">Name:</span>
<span class="t" style="left:479.5px;top:110.10px;font-size:6.40px;line-height:8px;color:#555;font-weight:400;letter-spacing:-0.179px;">000852/A;1-Inspect-Torque</span>
<div style="left:920.5px;top:94.3px;width:18px;height:16.5px;background:#fff;border:0.8px solid #c9c9c9;border-radius:2px;box-sizing:border-box;"></div>
<svg style="position:absolute;left:924.5px;top:100.5px;" width="10" height="4" viewBox="0 0 10 4"><circle cx="1.7" cy="2" r="1" fill="#222"/><circle cx="5" cy="2" r="1" fill="#222"/><circle cx="8.3" cy="2" r="1" fill="#222"/></svg>
<div style="left:940.6px;top:94.3px;width:16px;height:16.5px;background:#fff;border:0.8px solid #c9c9c9;border-radius:2px;box-sizing:border-box;"></div>
<svg style="position:absolute;left:943.6px;top:97.5px;" width="10" height="10" viewBox="0 0 10 10"><path d="M1 3.5V1H3.5 M6.5 1H9V3.5 M9 6.5V9H6.5 M3.5 9H1V6.5" fill="none" stroke="#555" stroke-width="0.7"/></svg>
<svg style="position:absolute;left:952.5px;top:115px;" width="8" height="5" viewBox="0 0 8 5"><path d="M1 4L4 1.2L7 4" fill="none" stroke="#444" stroke-width="0.8"/></svg>
<span class="t" style="left:384.2px;top:127.60px;font-size:7.39px;line-height:10px;color:#333;font-weight:400;-webkit-text-stroke:0.32px #333;">Overview</span>
<span class="t" style="left:425.4px;top:127.60px;font-size:7.20px;line-height:10px;color:#333;font-weight:400;-webkit-text-stroke:0.32px #333;">PMI</span>
<span class="t" style="left:448.5px;top:127.60px;font-size:7.29px;line-height:10px;color:#333;font-weight:400;-webkit-text-stroke:0.32px #333;">Where Used</span>
<span class="t" style="left:498.7px;top:127.60px;font-size:7.38px;line-height:10px;color:#2e7f9c;font-weight:400;-webkit-text-stroke:0.32px #2e7f9c;">Characteristic</span>
<span class="t" style="left:554px;top:127.60px;font-size:7.50px;line-height:10px;color:#333;font-weight:400;-webkit-text-stroke:0.32px #333;">History</span>
<span class="t" style="left:588.3px;top:127.60px;font-size:7.15px;line-height:10px;color:#333;font-weight:400;-webkit-text-stroke:0.32px #333;">Reference</span>
<span class="t" style="left:631.6px;top:127.60px;font-size:7.20px;line-height:10px;color:#333;font-weight:400;-webkit-text-stroke:0.32px #333;">Attachments</span>
<div style="left:497.4px;top:138.4px;width:48.5px;height:1.4px;background:#3b93b3;"></div>
<div style="left:382.3px;top:146.2px;width:576.6px;height:80.2px;background:#fff;border:0.8px solid #e4e4e4;border-radius:2px;box-sizing:border-box;"></div>
<svg style="position:absolute;left:386.5px;top:151.5px;" width="6" height="6" viewBox="0 0 6 6"><path d="M0.5 1H5.5L3 4.8Z" fill="#222"/></svg>
<span class="t" style="left:395px;top:150.40px;font-size:7.28px;line-height:9px;color:#333;font-weight:400;-webkit-text-stroke:0.32px #333;">Characteristic Instance</span>
<div style="left:386.7px;top:164.6px;width:567px;height:0.8px;background:#ededed;"></div>
<svg style="position:absolute;left:389.5px;top:171.5px;" width="10" height="10" viewBox="0 0 10 10"><path d="M1 2.5L2 3.5L3.5 1.5 M5 2.5H9 M1 6.5L2 7.5L3.5 5.5 M5 6.5H9" fill="none" stroke="#bbb" stroke-width="0.7"/></svg>
<span class="t" style="left:400.9px;top:170.20px;font-size:5.00px;line-height:6px;color:#b5b5b5;font-weight:400;">Selection</span>
<span class="t" style="left:400.9px;top:176.90px;font-size:5.00px;line-height:6px;color:#b5b5b5;font-weight:400;">Mode</span>
<svg style="position:absolute;left:428.5px;top:171.5px;" width="10" height="10" viewBox="0 0 10 10"><path d="M1.5 5.5L3.8 8L8.5 2" fill="none" stroke="#bbb" stroke-width="0.7"/></svg>
<span class="t" style="left:439.5px;top:170.20px;font-size:5.00px;line-height:6px;color:#b5b5b5;font-weight:400;">Select</span>
<span class="t" style="left:439.5px;top:176.90px;font-size:5.00px;line-height:6px;color:#b5b5b5;font-weight:400;">All</span>
<div style="left:386.7px;top:186.2px;width:567px;height:1px;background:#d6d6d6;"></div>
<div style="left:387.0px;top:192.2px;width:566.5px;height:12.1px;background:#e6e6e6;border-radius:2px 2px 0 0;"></div>
<div style="left:387.0px;top:204.3px;width:566.5px;height:17.4px;background:#fff;border:0.8px solid #e4e4e4;border-top:none;border-radius:0 0 2px 2px;box-sizing:border-box;"></div>
<span class="t" style="left:411.7px;top:194.70px;font-size:6.40px;line-height:8px;color:#333;font-weight:400;letter-spacing:-0.200px;-webkit-text-stroke:0.1px #333;">ID</span>
<svg style="position:absolute;left:422px;top:195.7px;" width="4" height="6" viewBox="0 0 4 6"><path d="M0.4 2.6L2 0.6L3.6 2.6Z M0.4 3.4L2 5.4L3.6 3.4Z" fill="#3a3a3a"/></svg>
<div style="left:458.3px;top:192.2px;width:0.8px;height:12.1px;background:#c8c8c8;"></div>
<span class="t" style="left:462.7px;top:194.70px;font-size:6.40px;line-height:8px;color:#333;font-weight:400;letter-spacing:-0.220px;-webkit-text-stroke:0.1px #333;">Name</span>
<svg style="position:absolute;left:483px;top:195.7px;" width="4" height="6" viewBox="0 0 4 6"><path d="M0.4 2.6L2 0.6L3.6 2.6Z M0.4 3.4L2 5.4L3.6 3.4Z" fill="#3a3a3a"/></svg>
<div style="left:559.2px;top:192.2px;width:0.8px;height:12.1px;background:#c8c8c8;"></div>
<span class="t" style="left:563.9px;top:194.70px;font-size:6.40px;line-height:8px;color:#333;font-weight:400;letter-spacing:-0.217px;-webkit-text-stroke:0.1px #333;">Type</span>
<svg style="position:absolute;left:581.2px;top:195.7px;" width="4" height="6" viewBox="0 0 4 6"><path d="M0.4 2.6L2 0.6L3.6 2.6Z M0.4 3.4L2 5.4L3.6 3.4Z" fill="#3a3a3a"/></svg>
<div style="left:661.1px;top:192.2px;width:0.8px;height:12.1px;background:#c8c8c8;"></div>
<span class="t" style="left:665.7px;top:194.70px;font-size:6.45px;line-height:8px;color:#333;font-weight:400;-webkit-text-stroke:0.1px #333;">Information</span>
<svg style="position:absolute;left:702.3px;top:195.7px;" width="4" height="6" viewBox="0 0 4 6"><path d="M0.4 2.6L2 0.6L3.6 2.6Z M0.4 3.4L2 5.4L3.6 3.4Z" fill="#3a3a3a"/></svg>
<div style="left:762.4px;top:192.2px;width:0.8px;height:12.1px;background:#c8c8c8;"></div>
<span class="t" style="left:767px;top:194.70px;font-size:6.40px;line-height:8px;color:#333;font-weight:400;-webkit-text-stroke:0.1px #333;">Unit</span>
<svg style="position:absolute;left:783.3px;top:195.7px;" width="4" height="6" viewBox="0 0 4 6"><path d="M0.4 2.6L2 0.6L3.6 2.6Z M0.4 3.4L2 5.4L3.6 3.4Z" fill="#3a3a3a"/></svg>
<div style="left:813.2px;top:192.2px;width:0.8px;height:12.1px;background:#c8c8c8;"></div>
<svg style="position:absolute;left:822.3px;top:195.7px;" width="4" height="6" viewBox="0 0 4 6"><path d="M0.4 2.6L2 0.6L3.6 2.6Z M0.4 3.4L2 5.4L3.6 3.4Z" fill="#3a3a3a"/></svg>
<div style="left:827.4px;top:192.2px;width:0.8px;height:12.1px;background:#c8c8c8;"></div>
<span class="t" style="left:831.2px;top:194.70px;font-size:6.40px;line-height:8px;color:#333;font-weight:400;letter-spacing:-0.173px;-webkit-text-stroke:0.1px #333;">Owning User</span>
<svg style="position:absolute;left:871.2px;top:195.7px;" width="4" height="6" viewBox="0 0 4 6"><path d="M0.4 2.6L2 0.6L3.6 2.6Z M0.4 3.4L2 5.4L3.6 3.4Z" fill="#3a3a3a"/></svg>
<div style="left:877.8px;top:192.2px;width:0.8px;height:12.1px;background:#c8c8c8;"></div>
<span class="t" style="left:881.6px;top:194.70px;font-size:6.40px;line-height:8px;color:#333;font-weight:400;letter-spacing:-0.066px;-webkit-text-stroke:0.1px #333;">Creation Date</span>
<svg style="position:absolute;left:924px;top:195.7px;" width="4" height="6" viewBox="0 0 4 6"><path d="M0.4 2.6L2 0.6L3.6 2.6Z M0.4 3.4L2 5.4L3.6 3.4Z" fill="#3a3a3a"/></svg>
<svg style="position:absolute;left:943.5px;top:194px;" width="9" height="9" viewBox="0 0 9 9"><circle cx="4.5" cy="4.5" r="3.2" fill="none" stroke="#555" stroke-width="1.3" stroke-dasharray="1.1 1.4"/><circle cx="4.5" cy="4.5" r="2.6" fill="none" stroke="#555" stroke-width="0.6"/><circle cx="4.5" cy="4.5" r="1.1" fill="none" stroke="#555" stroke-width="0.6"/></svg>
<div style="left:459.3px;top:217.3px;width:285.5px;height:2.8px;background:#b3b3b3;border-radius:1.4px;"></div>
<div style="left:382.3px;top:230.3px;width:576.6px;height:120.1px;background:#fff;border:0.8px solid #e4e4e4;border-radius:2px;box-sizing:border-box;"></div>
<svg style="position:absolute;left:386.5px;top:236px;" width="6" height="6" viewBox="0 0 6 6"><path d="M0.5 1H5.5L3 4.8Z" fill="#222"/></svg>
<span class="t" style="left:395px;top:234.90px;font-size:7.36px;line-height:9px;color:#333;font-weight:400;-webkit-text-stroke:0.32px #333;">Characteristic Specification</span>
<div style="left:386.7px;top:248.8px;width:567px;height:0.8px;background:#e6e6e6;"></div>
<svg style="position:absolute;left:750.5px;top:254.5px;" width="10" height="10" viewBox="0 0 10 10"><path d="M1.5 1.5H5V7H1.5Z" fill="none" stroke="#bbb" stroke-width="0.7"/><path d="M3.5 3.5H8V8.5H3.5Z" fill="#fff" stroke="#bbb" stroke-width="0.7"/></svg>
<svg style="position:absolute;left:770px;top:254.5px;" width="10" height="10" viewBox="0 0 10 10"><path d="M1.5 3H5V8.5H1.5Z M4 1.5H8.5V8.5H4" fill="none" stroke="#bbb" stroke-width="0.7"/></svg>
<svg style="position:absolute;left:788.7px;top:254.5px;" width="10" height="10" viewBox="0 0 10 10"><rect x="1" y="1" width="8" height="8" fill="none" stroke="#bbb" stroke-width="0.7"/><path d="M5 1V9 M1 5H9" stroke="#bbb" stroke-width="0.6"/></svg>
<span class="t" style="left:800.1px;top:254.20px;font-size:4.90px;line-height:6px;color:#b5b5b5;font-weight:400;">Compare</span>
<span class="t" style="left:800.1px;top:260.80px;font-size:4.90px;line-height:6px;color:#b5b5b5;font-weight:400;">Version</span>
<svg style="position:absolute;left:827.4px;top:254.5px;" width="10" height="10" viewBox="0 0 10 10"><circle cx="5" cy="5" r="4" fill="none" stroke="#bbb" stroke-width="0.7"/><path d="M5 4.3V7.2" stroke="#bbb" stroke-width="0.7"/><circle cx="5" cy="3" r="0.4" fill="#bbb"/></svg>
<span class="t" style="left:838.9px;top:254.20px;font-size:4.90px;line-height:6px;color:#b5b5b5;font-weight:400;">Characteristic</span>
<span class="t" style="left:838.9px;top:260.80px;font-size:4.90px;line-height:6px;color:#b5b5b5;font-weight:400;">Information</span>
<svg style="position:absolute;left:877.8px;top:257.6px;" width="11" height="4" viewBox="0 0 11 4"><circle cx="1.7" cy="2" r="1" fill="#333"/><circle cx="5.2" cy="2" r="1" fill="#333"/><circle cx="8.7" cy="2" r="1" fill="#333"/></svg>
<div style="left:891px;top:252.5px;width:0.7px;height:14px;background:#dcdcdc;"></div>
<svg style="position:absolute;left:895px;top:254.5px;" width="10" height="10" viewBox="0 0 10 10"><path d="M1.5 5.5L3.8 8L8.5 2" fill="none" stroke="#555" stroke-width="0.7"/></svg>
<span class="t" style="left:906.1px;top:256.60px;font-size:4.82px;line-height:6px;color:#444;font-weight:400;">Select</span>
<svg style="position:absolute;left:922.2px;top:258.1px;" width="4" height="3" viewBox="0 0 4 3"><path d="M0.2 0.5H3.8L2 2.5Z" fill="#333"/></svg>
<svg style="position:absolute;left:933.5px;top:254.5px;" width="11" height="10" viewBox="0 0 11 10"><rect x="1" y="1.5" width="2.5" height="2.5" fill="none" stroke="#555" stroke-width="0.6"/><rect x="1" y="6" width="2.5" height="2.5" fill="none" stroke="#555" stroke-width="0.6"/><path d="M5 2.8H9.5 M5 7.3H9.5" stroke="#555" stroke-width="0.6"/></svg>
<svg style="position:absolute;left:946.2px;top:258.1px;" width="4" height="3" viewBox="0 0 4 3"><path d="M0.2 0.5H3.8L2 2.5Z" fill="#333"/></svg>
<div style="left:386.7px;top:270px;width:567px;height:1.2px;background:#d0d0d0;"></div>
<svg style="position:absolute;left:394px;top:285px;" width="26" height="27" viewBox="0 0 26 27"><defs><linearGradient id="tg" x1="0" y1="0" x2="0" y2="1"><stop offset="0" stop-color="#4aa3c0"/><stop offset="1" stop-color="#1f7b9c"/></linearGradient></defs><rect x="1" y="1" width="17.8" height="21.6" fill="#f6f6f6" stroke="#777" stroke-width="0.8"/><circle cx="5.4" cy="5.5" r="2.4" fill="#cfe3ea" stroke="#2f7f9f" stroke-width="1.3"/><path d="M4.4 7.6L3.8 10.5L5.2 9.7L6 10.8L6.4 7.8" fill="#2f7f9f"/><path d="M9.5 3.8H15.5 M10.5 5.3H15" stroke="#8a8a8a" stroke-width="0.6"/><path d="M3 13H12 M3 14.6H12 M3 16.2H12 M3 17.8H11" stroke="#a0a0a0" stroke-width="0.8"/><rect x="11.6" y="12" width="13.4" height="13.4" fill="url(#tg)" stroke="#1a6a88" stroke-width="0.5"/><rect x="13.8" y="16" width="3.6" height="3.6" fill="#d9eef5" stroke="#fff" stroke-width="0.5"/><rect x="19.2" y="16" width="3.6" height="3.6" fill="none" stroke="#fff" stroke-width="0.9"/></svg>
<span class="t" style="left:427.4px;top:277.00px;font-size:8.25px;line-height:10px;color:#333;font-weight:400;letter-spacing:-0.357px;-webkit-text-stroke:0.1px #333;">Torque</span>
<span class="t" style="left:427.5px;top:288.30px;font-size:6.40px;line-height:8px;color:#333;font-weight:400;letter-spacing:-0.089px;">Version Information:</span>
<span class="t" style="left:488.3px;top:288.30px;font-size:6.40px;line-height:8px;color:#333;font-weight:400;">1</span>
<span class="t" style="left:427.5px;top:296.50px;font-size:6.40px;line-height:8px;color:#333;font-weight:400;letter-spacing:-0.264px;">Release Status:</span>
<span class="t" style="left:472.5px;top:296.50px;font-size:6.40px;line-height:8px;color:#333;font-weight:400;letter-spacing:-0.445px;">TCM Released</span>
<span class="t" style="left:427.5px;top:304.70px;font-size:6.40px;line-height:8px;color:#333;font-weight:400;letter-spacing:-0.023px;">Date Modified:</span>
<span class="t" style="left:472.7px;top:304.70px;font-size:6.40px;line-height:8px;color:#333;font-weight:400;letter-spacing:-0.182px;">13-Mar-2025</span>
<div style="left:427px;top:312.1px;width:9px;height:8.8px;border:0.8px solid #d36aa6;background:#f7e6f0;box-sizing:border-box;border-radius:1px;"></div>
<span class="t" style="left:428.6px;top:313.60px;font-size:4.60px;line-height:6px;color:#b8478f;font-weight:700;">MI</span>
<svg style="position:absolute;left:438.5px;top:312.5px;" width="10" height="8" viewBox="0 0 10 8"><path d="M1 1V7.5" stroke="#333" stroke-width="0.6"/><rect x="1.3" y="1" width="7" height="4.5" fill="#fff" stroke="#333" stroke-width="0.5"/><rect x="1.3" y="1" width="3.5" height="2.25" fill="#222"/><rect x="4.8" y="3.25" width="3.5" height="2.25" fill="#222"/></svg>
</body></html>
